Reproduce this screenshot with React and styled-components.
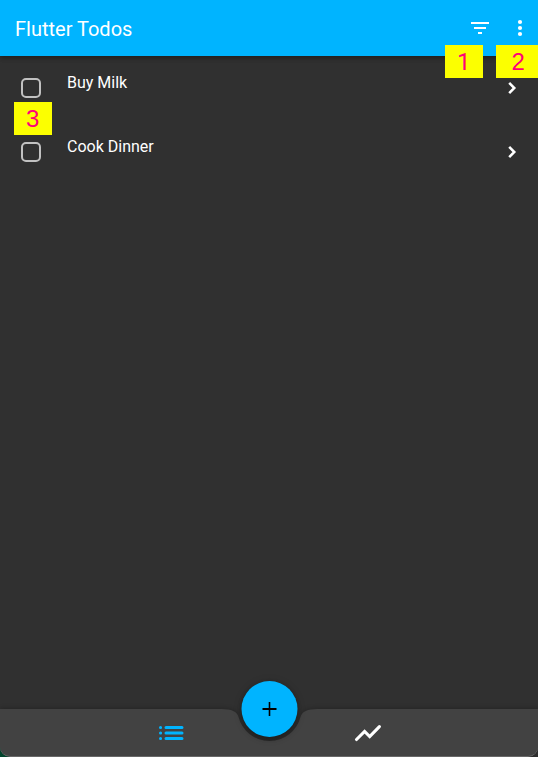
import React from "react";
import styled, { createGlobalStyle } from "styled-components";

const GlobalStyle = createGlobalStyle`
  * { box-sizing: border-box; }
  html, body { margin: 0; padding: 0; overflow: hidden; background: #303030; }
`;

const Screen = styled.div`
  position: relative;
  display: flex;
  flex-direction: column;
  width: 538px;
  height: 757px;
  overflow: hidden;
  background: #303030;
  color: #fff;
  font-family: Roboto, "Liberation Sans", sans-serif;
`;

const AppBar = styled.header`
  display: flex;
  align-items: center;
  height: 56px;
  padding: 0 6px 0 15px;
  flex: none;
  background: #00b4ff;
  box-shadow: 0 2px 4px rgba(0, 0, 0, 0.28), 0 1px 6px rgba(0, 0, 0, 0.14);
`;

const Title = styled.h1`
  flex: 1;
  margin: 0;
  padding-top: 2px;
  font-size: 20px;
  font-weight: 400;
  line-height: 24px;
`;

const IconButton = styled.button`
  display: flex;
  justify-content: center;
  align-items: center;
  width: ${(p) => p.$width}px;
  height: 48px;
  padding: 0;
  border: 0;
  background: transparent;
  color: inherit;
`;

const Icon = styled.svg`
  display: block;
  width: 24px;
  height: 24px;
  fill: currentColor;
`;

const TodoList = styled.ul`
  flex: 1;
  margin: 0;
  padding: 0;
  list-style: none;
`;

const TodoRow = styled.li`
  display: flex;
  align-items: center;
  height: 64px;
  padding: 0 14px 0 21px;
`;

const Checkbox = styled.span`
  width: 20px;
  height: 20px;
  border: 2px solid #c1c1c1;
  border-radius: 5px;
`;

const TodoTitle = styled.span`
  flex: 1;
  align-self: flex-start;
  margin: 17px 0 0 26px;
  font-size: 16px;
  line-height: 20px;
`;

const Badge = styled.span`
  position: absolute;
  left: ${(p) => p.$x}px;
  top: ${(p) => p.$y}px;
  width: ${(p) => p.$width || 38}px;
  height: 33px;
  padding-left: ${(p) => p.$inset || 12}px;
  background: #fcff00;
  color: #ff0078;
  font-family: ${(p) => (p.$plain ? "Roboto" : '"Liberation Sans"')}, Arial, sans-serif;
  font-size: 24px;
  line-height: 34px;
`;

const BottomBar = styled.nav`
  position: relative;
  display: flex;
  flex: none;
  height: 48px;
  filter: drop-shadow(0 -1px 2px rgba(0, 0, 0, 0.22));
`;

const Tab = styled.div`
  display: flex;
  width: ${(p) => p.$width}px;
  padding: ${(p) => p.$pad};
  background: #424242;
  border-bottom: 1px solid #686868;
  border-radius: ${(p) => (p.$side === "left" ? "0 0 0 10px" : "0 0 10px 0")};
  color: ${(p) => (p.$active ? "#00b4ff" : "#fff")};
`;

const Notch = styled.svg`
  display: block;
  width: 97px;
  height: 48px;
`;

const TabIcon = styled.svg`
  display: block;
  width: 28px;
  height: 20px;
`;

const AddButton = styled.button`
  position: absolute;
  left: 241px;
  top: 681px;
  transform: translateX(0.5px);
  display: flex;
  align-items: center;
  justify-content: center;
  width: 56px;
  height: 56px;
  padding: 0;
  border: 0;
  border-radius: 50%;
  background: #00b4ff;
  color: #000;
  box-shadow: 0 2px 4px rgba(0, 0, 0, 0.3), 0 1px 8px rgba(0, 0, 0, 0.18);
`;

const Corner = styled.span`
  position: absolute;
  left: 0;
  bottom: 0;
  width: 10px;
  height: 10px;
  background: #00452d;
`;

const todos = ["Buy Milk", "Cook Dinner"];

export default function App() {
  return (
    <>
      <GlobalStyle />
      <Screen>
        <AppBar>
          <Title>Flutter Todos</Title>
          <IconButton $width={48} aria-label="Filter">
            <Icon viewBox="0 0 24 24">
              <path d="M10 18h4v-2h-4v2zM3 6v2h18V6H3zm3 7h12v-2H6v2z" />
            </Icon>
          </IconButton>
          <IconButton $width={28} aria-label="More">
            <Icon viewBox="0 0 24 24">
              <circle cx="14" cy="6" r="2.1" />
              <circle cx="14" cy="12" r="2.1" />
              <circle cx="14" cy="18" r="2.1" />
            </Icon>
          </IconButton>
        </AppBar>
        <TodoList>
          {todos.map((title) => (
            <TodoRow key={title}>
              <Checkbox />
              <TodoTitle>{title}</TodoTitle>
              <Icon viewBox="0 0 24 24">
                <path d="M9.2 6.8 14.3 12l-5.1 5.2" fill="none" stroke="currentColor" strokeWidth="2.5" />
              </Icon>
            </TodoRow>
          ))}
        </TodoList>
        <Corner />
        <BottomBar>
          <Tab $side="left" $width={221} $active $pad="14px 0 0 157px">
            <TabIcon viewBox="157 723 28 20" fill="none" stroke="currentColor" strokeWidth="3" strokeLinecap="round">
              <path d="M160.5 727.5h.1M160.5 733h.1M160.5 738.5h.1M166 727.5h16M166 733h16M166 738.5h16" />
            </TabIcon>
          </Tab>
          <Notch viewBox="-48.5 0 97 48">
            <path
              fill="#424242"
              d="M-48.5 0H-48Q-33 0 -31.03 7.82A32 32 0 0 0 31.03 7.82Q33 0 48 0H48.5V48H-48.5Z"
            />
            <path fill="#686868" d="M-48.5 47h97v1h-97z" />
          </Notch>
          <Tab $side="right" $width={220} $pad="14px 0 0 36px">
            <TabIcon viewBox="354 723 28 20" fill="none" stroke="currentColor" strokeWidth="3.1" strokeLinecap="round">
              <path d="M356.5 739.5 364.6 731.4 369.7 736.5 379.4 726.6" />
            </TabIcon>
          </Tab>
        </BottomBar>
        <AddButton aria-label="Add">
          <Icon viewBox="0 0 24 24">
            <path d="M5 11.1h14v1.8H5zM11.2 5h1.6v14h-1.6z" />
          </Icon>
        </AddButton>
        <Badge $x={445} $y={45} $plain>1</Badge>
        <Badge $x={496} $y={45} $width={42} $inset={15.5}>2</Badge>
        <Badge $x={14} $y={102}>3</Badge>
      </Screen>
    </>
  );
}
